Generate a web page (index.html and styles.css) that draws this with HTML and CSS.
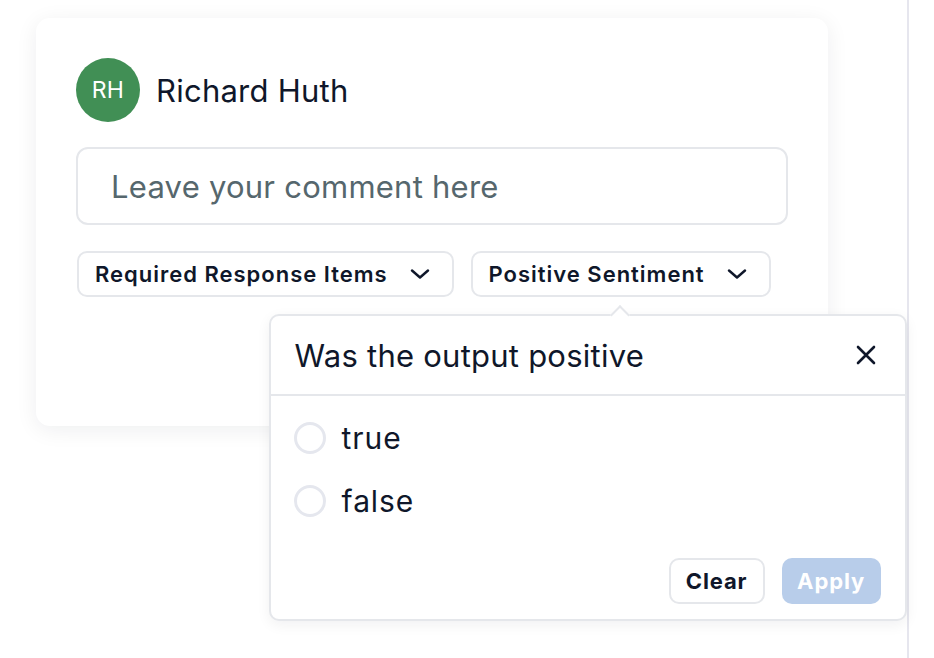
FILE: index.html
```html
<!DOCTYPE html>
<html lang="en">
<head>
<meta charset="utf-8">
<title>Comment</title>
<link rel="stylesheet" href="styles.css">
</head>
<body>
<div class="page">
  <main class="main">
    <section class="card">
      <div class="author">
        <div class="avatar">RH</div>
        <div class="name">Richard Huth</div>
      </div>
      <div class="comment">Leave your comment here</div>
      <div class="chips">
        <button class="chip">Required Response Items
          <svg class="chev" viewBox="0 0 20 10" width="20" height="10"><path d="M2 1.5 L10 8.5 L18 1.5" fill="none" stroke="#0f172a" stroke-width="2.4" stroke-linecap="round" stroke-linejoin="round"/></svg>
        </button>
        <div class="anchor">
          <button class="chip">Positive Sentiment
            <svg class="chev" viewBox="0 0 20 10" width="20" height="10"><path d="M2 1.5 L10 8.5 L18 1.5" fill="none" stroke="#0f172a" stroke-width="2.4" stroke-linecap="round" stroke-linejoin="round"/></svg>
          </button>
          <div class="popover">
            <div class="arrow"></div>
            <div class="pop-head">
              <div class="pop-title">Was the output positive</div>
              <svg class="close" viewBox="0 0 20 20" width="20" height="20"><path d="M2 2 L18 18 M18 2 L2 18" fill="none" stroke="#0f172a" stroke-width="2.6" stroke-linecap="round"/></svg>
            </div>
            <div class="pop-body">
              <label class="option"><span class="radio"></span><span>true</span></label>
              <label class="option"><span class="radio"></span><span>false</span></label>
              <div class="pop-foot">
                <button class="btn btn-clear">Clear</button>
                <button class="btn btn-apply">Apply</button>
              </div>
            </div>
          </div>
        </div>
      </div>
    </section>
  </main>
  <aside class="side"></aside>
</div>
</body>
</html>
```

FILE: styles.css
```css
* { box-sizing: border-box; }
html, body {
  margin: 0;
  padding: 0;
  background: #ffffff;
  font-family: Inter, "Noto Sans", sans-serif;
  color: #0f172a;
  letter-spacing: 0.015em;
}
.page {
  display: flex;
  height: 658px;
  overflow: hidden;
}
.main {
  width: 909px;
  flex: none;
  border-right: 2px solid #e6e6ee;
  padding: 18px 0 0 36px;
}
.side { flex: 1; }
.card {
  width: 792px;
  background: #fff;
  border-radius: 14px;
  box-shadow: 0 4px 22px rgba(15, 23, 42, 0.07);
  padding: 40px 40px 129px 40px;
}
.author {
  display: flex;
  align-items: center;
  gap: 16px;
  height: 64px;
}
.avatar {
  width: 64px;
  height: 64px;
  border-radius: 50%;
  background: #418f55;
  color: #fff;
  font-size: 23px;
  display: flex;
  align-items: center;
  justify-content: center;
}
.name {
  font-size: 31px;
  color: #0f172a;
}
.comment {
  margin-top: 25px;
  height: 78px;
  border: 2px solid #e5e7eb;
  border-radius: 12px;
  padding: 0 33px;
  display: flex;
  align-items: center;
  font-size: 31px;
  color: #56676d;
}
.chips {
  margin-top: 26px;
  display: flex;
  gap: 17px;
  padding-left: 1px;
}
.anchor { position: relative; }
.chip {
  height: 46px;
  border: 2px solid #e5e7eb;
  border-radius: 10px;
  background: #fff;
  font-family: inherit;
  font-size: 22px;
  font-weight: 600;
  letter-spacing: 0.045em;
  color: #0f172a;
  padding: 0 22px 0 16px;
  display: flex;
  align-items: center;
  gap: 22px;
}
.chev { display: block; }
.popover {
  position: absolute;
  left: -202px;
  top: 63px;
  width: 638px;
  height: 307px;
  background: #fff;
  border: 2px solid #e5e7eb;
  border-radius: 10px;
  box-shadow: 0 4px 14px rgba(15, 23, 42, 0.06);
  z-index: 5;
}
.arrow {
  position: absolute;
  left: 342px;
  top: -8px;
  width: 14px;
  height: 14px;
  background: #fff;
  border-top: 2px solid #e5e7eb;
  border-left: 2px solid #e5e7eb;
  transform: rotate(45deg);
}
.pop-head {
  height: 80px;
  border-bottom: 2px solid #e5e7eb;
  display: flex;
  align-items: center;
  justify-content: space-between;
  padding: 0 29px 0 24px;
}
.pop-title {
  font-size: 31px;
  color: #0f172a;
}
.close { display: block; }
.pop-body {
  padding: 10px 24px 0 23px;
}
.option {
  height: 63px;
  display: flex;
  align-items: center;
  gap: 16px;
  font-size: 30px;
  letter-spacing: 0.03em;
  color: #0f172a;
}
.radio {
  width: 32px;
  height: 32px;
  border-radius: 50%;
  border: 3px solid #e5e7ee;
  flex: none;
}
.pop-foot {
  margin-top: 26px;
  display: flex;
  justify-content: flex-end;
  gap: 17px;
}
.btn {
  height: 46px;
  border-radius: 10px;
  font-family: inherit;
  font-size: 22px;
  font-weight: 700;
  letter-spacing: 0.04em;
  padding: 0;
  display: flex;
  align-items: center;
  justify-content: center;
}
.btn-clear {
  width: 96px;
  background: #fff;
  border: 2px solid #e5e7eb;
  color: #0f172a;
}
.btn-apply {
  width: 99px;
  background: #b8cdea;
  border: none;
  color: #fff;
}
```
